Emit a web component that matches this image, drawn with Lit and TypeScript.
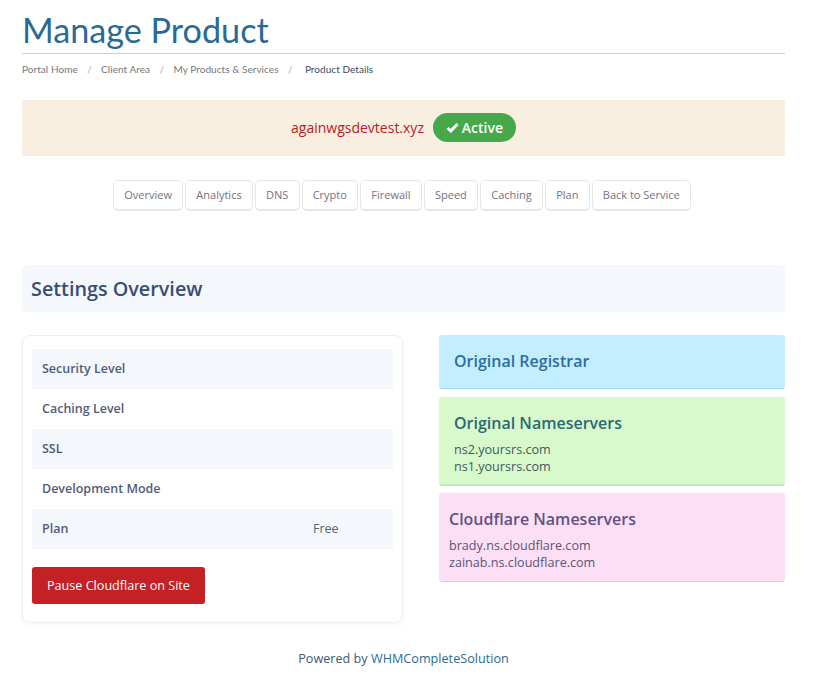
import { LitElement, html, css } from "lit";
import { customElement } from "lit/decorators.js";

@customElement("app-root")
export class AppRoot extends LitElement {
  static styles = css`
    :host { display: block; font-family: "Open Sans", "Liberation Sans", sans-serif; color: #3f4a6b; background: #fff; height: 696px; overflow: hidden; }
    .page { width: 763px; margin-left: 22px; display: flex; flex-direction: column; }
    h1 { margin: 0; height: 54px; box-sizing: border-box; border-bottom: 1px solid #cfcfcf; font-family: Lato, sans-serif; font-weight: 400; font-size: 34.2px; line-height: 60px; color: #2a6a94; }
    .crumbs { display: flex; height: 46px; align-items: flex-start; padding-top: 8px; box-sizing: border-box; font-family: Lato, sans-serif; font-size: 10px; letter-spacing: 0.05px; line-height: 14px; color: #777; }
    .crumbs .sep { margin: 0 9.4px; color: #aaa; }
    .crumbs .cur { color: #3d4a5c; margin-left: 3px; }
    .banner { height: 56px; box-sizing: border-box; padding-bottom: 2px; background: #f9efe0; display: flex; align-items: center; justify-content: center; gap: 9px; }
    .domain { color: #b81c24; font-size: 14px; }
    .pill { display: flex; align-items: center; gap: 3px; height: 29px; width: 83px; box-sizing: border-box; justify-content: center; border-radius: 15px; background: #46a84a; color: #fff; font-weight: 600; font-size: 14px; }
    .tabs { display: flex; justify-content: center; gap: 2px; margin-top: 24px; padding-right: 3px; height: 31px; }
    .tab { box-sizing: border-box; height: 31px; padding: 0 10.2px 2px; display: flex; align-items: center; border: 1px solid #e6e6e6; border-bottom-width: 2px; border-radius: 5px; font-size: 11px; color: #7a6f80; background: #fff; }
    .section { margin-top: 54px; height: 47px; box-sizing: border-box; padding-left: 9px; background: #f4f7fb; border-radius: 4px; display: flex; align-items: center; font-size: 19.8px; font-weight: 600; color: #3a4d72; }
    .cols { display: flex; gap: 36px; margin-top: 23px; align-items: flex-start; }
    .card { width: 381px; height: 288px; box-sizing: border-box; border: 1px solid #eceef2; border-radius: 8px; padding: 13px 9px; box-shadow: 0 2px 6px rgba(220, 225, 235, 0.3); }
    .row { height: 40px; box-sizing: border-box; padding: 0 0 2px 10px; display: flex; align-items: center; font-size: 12.5px; font-weight: 600; color: #515b78; }
    .row.alt { background: #f4f7fb; }
    .row span:first-child { width: 271px; }
    .row .val { font-weight: 400; color: #5a6270; }
    .btn { margin-top: 18px; width: 173px; height: 37px; background: #c32126; color: #fff; border-radius: 3px; display: flex; align-items: center; justify-content: center; font-size: 12.6px; font-weight: 500; }
    .right { width: 346px; display: flex; flex-direction: column; gap: 8px; }
    .box { box-sizing: border-box; border-radius: 3px; padding: 0 15px; }
    .box h3 { margin: 0; font-size: 16px; font-weight: 600; line-height: 22px; }
    .box p { margin: 0; font-size: 12.6px; line-height: 17px; }
    .blue { height: 54px; background: #c2eeff; border-bottom: 1px solid #a8d8f5; padding-top: 15px; color: #2f6d9c; }
    .green { height: 89px; background: #d8f9cc; border-bottom: 2px solid #c0ecba; padding-top: 15px; color: #2a6a72; }
    .green h3 { margin-bottom: 7px; }
    .green p { color: #3f5a5c; }
    .pink { height: 89px; margin-top: -1px; background: #fddff5; border-bottom: 1px dotted #c8b0c4; padding: 15px 10px 0; color: #5f5283; }
    .pink h3 { margin-bottom: 7px; }
    .pink p { color: #5a5575; }
    .footer { margin-top: 26px; text-align: center; font-size: 12.65px; line-height: 18px; color: #3d5a6e; }
    .footer a { color: #2a6a92; text-decoration: none; }
  `;

  render() {
    const tabs = ["Overview", "Analytics", "DNS", "Crypto", "Firewall", "Speed", "Caching", "Plan", "Back to Service"];
    return html`
      <div class="page">
        <h1>Manage Product</h1>
        <div class="crumbs">
          <span>Portal Home</span><span class="sep">/</span>
          <span>Client Area</span><span class="sep">/</span>
          <span>My Products &amp; Services</span><span class="sep">/</span>
          <span class="cur">Product Details</span>
        </div>
        <div class="banner">
          <span class="domain">againwgsdevtest.xyz</span>
          <span class="pill">
            <svg width="13" height="11" viewBox="0 0 13 11"><path d="M1.5 6 L4.8 9 L11.5 2" fill="none" stroke="#fff" stroke-width="3"/></svg>
            Active
          </span>
        </div>
        <div class="tabs">${tabs.map((t) => html`<span class="tab">${t}</span>`)}</div>
        <div class="section">Settings Overview</div>
        <div class="cols">
          <div class="card">
            <div class="row alt"><span>Security Level</span></div>
            <div class="row"><span>Caching Level</span></div>
            <div class="row alt"><span>SSL</span></div>
            <div class="row"><span>Development Mode</span></div>
            <div class="row alt"><span>Plan</span><span class="val">Free</span></div>
            <div class="btn">Pause Cloudflare on Site</div>
          </div>
          <div class="right">
            <div class="box blue"><h3>Original Registrar</h3></div>
            <div class="box green"><h3>Original Nameservers</h3><p>ns2.yoursrs.com</p><p>ns1.yoursrs.com</p></div>
            <div class="box pink"><h3>Cloudflare Nameservers</h3><p>brady.ns.cloudflare.com</p><p>zainab.ns.cloudflare.com</p></div>
          </div>
        </div>
        <div class="footer">Powered by <a>WHMCompleteSolution</a></div>
      </div>
    `;
  }
}
